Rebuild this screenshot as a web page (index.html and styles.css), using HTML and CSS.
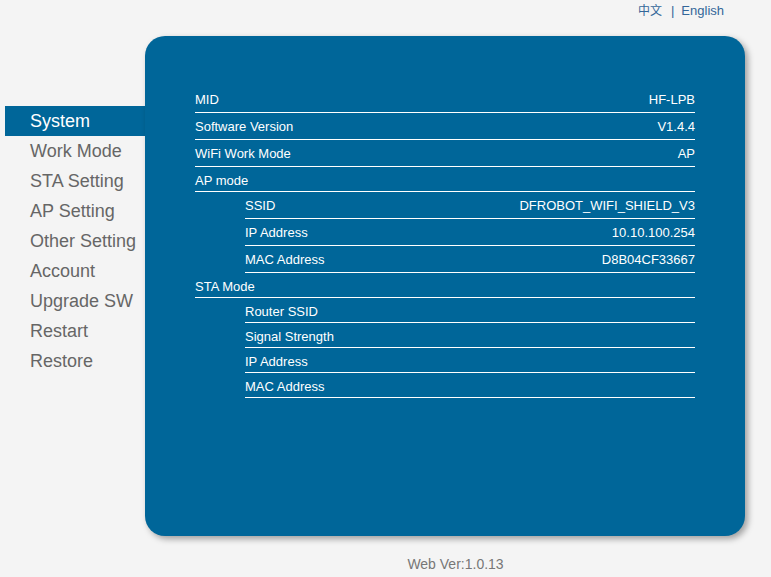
FILE: index.html
```html
<!DOCTYPE html>
<html>
<head>
<meta charset="utf-8">
<title>System</title>
<link rel="stylesheet" href="styles.css">
</head>
<body>
<div class="top">
  <a class="lang" href="#">中文</a><span class="sep">|</span><a class="lang" href="#">English</a>
</div>
<div class="main">
  <ul class="nav">
    <li class="active">System</li>
    <li>Work Mode</li>
    <li>STA Setting</li>
    <li>AP Setting</li>
    <li>Other Setting</li>
    <li>Account</li>
    <li>Upgrade SW</li>
    <li>Restart</li>
    <li>Restore</li>
  </ul>
  <div class="panel">
    <div class="row"><span>MID</span><span>HF-LPB</span></div>
    <div class="row"><span>Software Version</span><span>V1.4.4</span></div>
    <div class="row"><span>WiFi Work Mode</span><span>AP</span></div>
    <div class="row short"><span>AP mode</span></div>
    <div class="row sub"><span>SSID</span><span>DFROBOT_WIFI_SHIELD_V3</span></div>
    <div class="row sub"><span>IP Address</span><span>10.10.100.254</span></div>
    <div class="row sub"><span>MAC Address</span><span>D8B04CF33667</span></div>
    <div class="row short"><span>STA Mode</span></div>
    <div class="row sub short"><span>Router SSID</span></div>
    <div class="row sub short"><span>Signal Strength</span></div>
    <div class="row sub short"><span>IP Address</span></div>
    <div class="row sub short"><span>MAC Address</span></div>
  </div>
</div>
<div class="footer">Web Ver:1.0.13</div>
</body>
</html>
```
FILE: styles.css
```css
html, body {
  margin: 0;
  padding: 0;
  background: #f4f4f4;
  font-family: "Liberation Sans", Arial, sans-serif;
}
.top {
  height: 36px;
  display: flex;
  justify-content: flex-end;
  align-items: flex-start;
  padding-right: 47px;
  box-sizing: border-box;
  font-size: 13px;
  line-height: 22px;
  color: #336699;
}
.lang {
  color: #336699;
  text-decoration: none;
}
.lang:first-child {
  font-family: "Liberation Sans", "Noto Sans CJK SC", sans-serif;
  font-size: 12px;
}
.sep {
  margin: 0 7px 0 9px;
}
.main {
  display: flex;
  align-items: flex-start;
}
.nav {
  list-style: none;
  margin: 70px 0 0 5px;
  padding: 0;
  width: 140px;
}
.nav li {
  height: 30px;
  line-height: 30px;
  padding-left: 25px;
  font-size: 18px;
  color: #666666;
}
.nav li.active {
  background: #006699;
  color: #ffffff;
}
.panel {
  width: 600px;
  height: 500px;
  box-sizing: border-box;
  background: #006699;
  border-radius: 20px;
  box-shadow: 3px 3px 6px rgba(0, 0, 0, 0.35);
  padding: 50px 50px 0 50px;
}
.row {
  height: 27px;
  box-sizing: border-box;
  border-bottom: 1px solid #ffffff;
  display: flex;
  justify-content: space-between;
  align-items: center;
  color: #ffffff;
  font-size: 13px;
  padding-top: 1px;
}
.row.short {
  height: 25px;
  padding-top: 3px;
}
.row.sub {
  margin-left: 50px;
}
.footer {
  padding: 20px 0 0 140px;
  text-align: center;
  font-size: 14px;
  color: #777777;
}
```
